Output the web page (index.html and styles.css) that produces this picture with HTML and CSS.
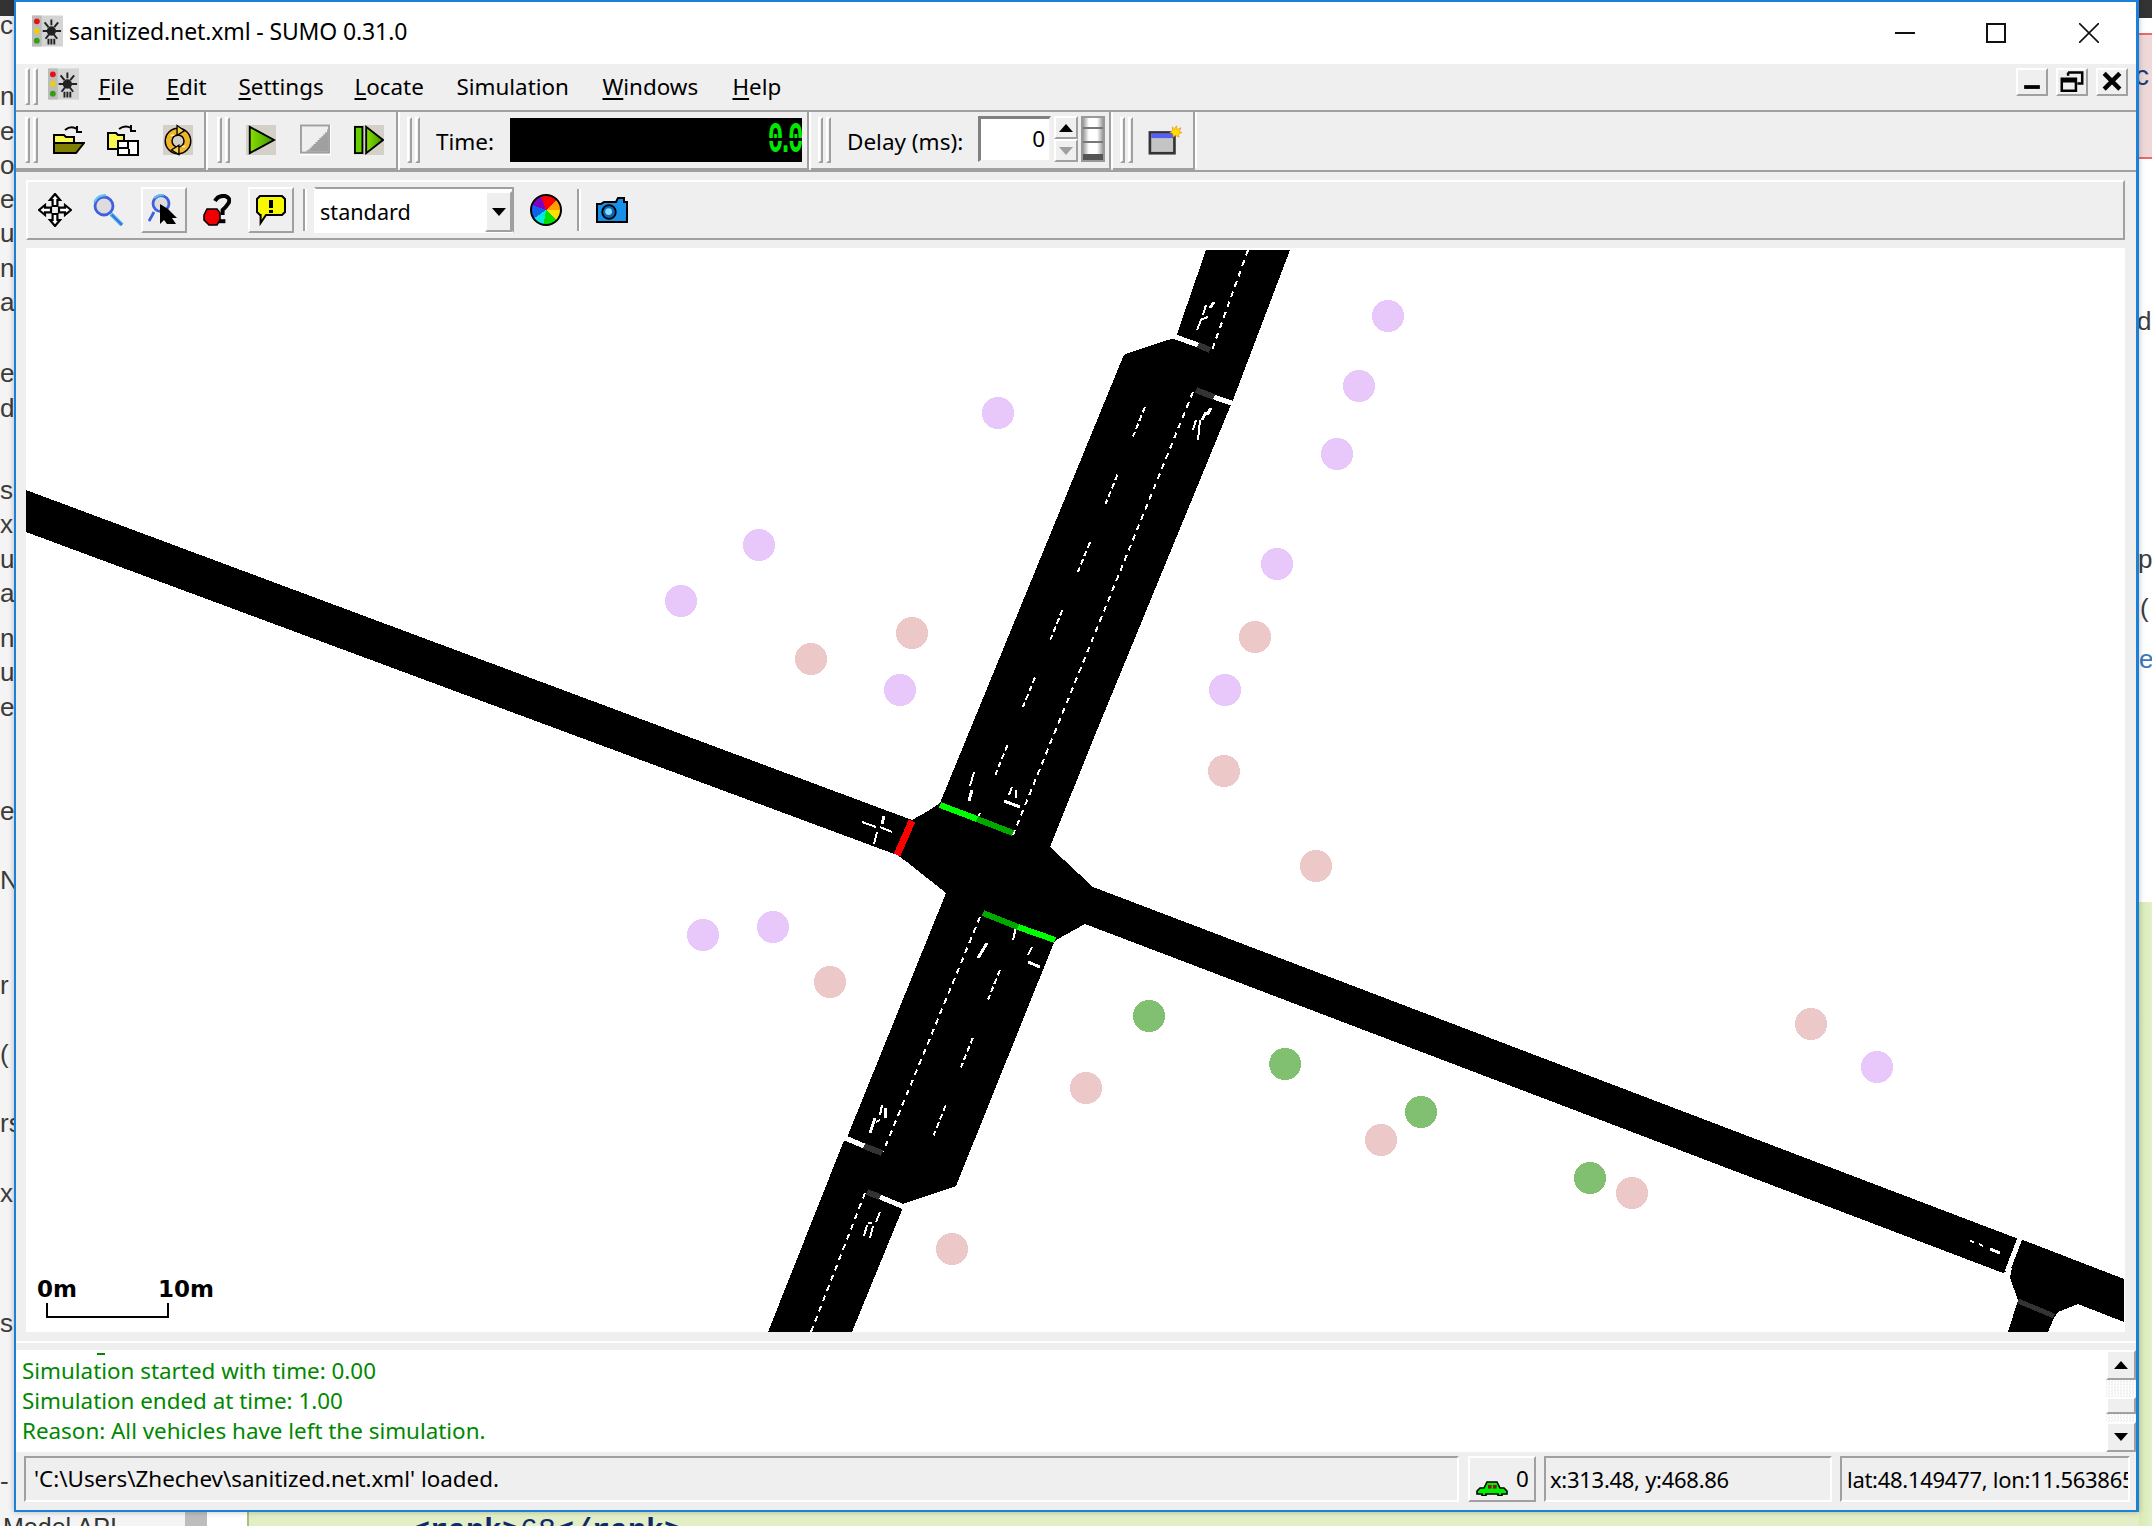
FILE: index.html
```html
<!DOCTYPE html>
<html lang="en">
<head>
<meta charset="utf-8">
<title>sanitized.net.xml - SUMO 0.31.0</title>
<link rel="stylesheet" href="styles.css">
</head>
<body>
<div class="desk">
  <div class="left-strip">
    <div class="dark-cap"></div>
    <p class="frag">c</p>
    <p class="frag m-a">n<br>e<br>o<br>e<br>u<br>n<br>a</p>
    <p class="frag m-b">e<br>d</p>
    <p class="frag m-c">s<br>x<br>u<br>a</p>
    <p class="frag m-d">n<br>u<br>e</p>
    <p class="frag m-e">e</p>
    <p class="frag m-f">N</p>
    <p class="frag m-e">r</p>
    <p class="frag m-f">(</p>
    <p class="frag m-f">rs</p>
    <p class="frag m-f">x</p>
    <p class="frag m-g">s</p>
    <p class="frag m-h">-</p>
  </div>
  <div class="right-strip">
    <div class="dark-cap"></div>
    <div class="pink-box"><span class="frag-r">c</span></div>
    <p class="frag frag-d">d</p>
    <p class="frag frag-p">p</p>
    <p class="frag frag-b">(</p>
    <p class="frag frag-e">e</p>
    <div class="green-fill"></div>
  </div>
  <div class="bottom-strip">
    <div class="api">Model API</div>
    <div class="api-scroll"></div>
    <div class="api-white"></div>
    <div class="code"><b>&lt;rank&gt;</b>68<b>&lt;/rank&gt;</b></div>
  </div>

  <div class="window">
    <header class="titlebar">
      <svg class="app-icon" viewBox="0 0 16 16"><use href="#logo"/></svg>
      <span class="title-text">sanitized.net.xml - SUMO 0.31.0</span>
      <div class="sys-buttons">
        <svg class="sys" viewBox="0 0 20 20"><path d="M0 10h20" stroke="#111" stroke-width="2"/></svg>
        <svg class="sys" viewBox="0 0 20 20"><rect x="1" y="1" width="18" height="18" fill="none" stroke="#111" stroke-width="2"/></svg>
        <svg class="sys sys-close" viewBox="0 0 20 20"><path d="M0 0l20 20M20 0L0 20" stroke="#111" stroke-width="1.6"/></svg>
      </div>
    </header>

    <nav class="menubar">
      <div class="grip"><i></i><i></i></div>
      <svg class="menu-icon" viewBox="0 0 16 16"><use href="#logo"/></svg>
      <ul class="menu">
        <li class="mi-file"><u>F</u>ile</li>
        <li class="mi-edit"><u>E</u>dit</li>
        <li class="mi-settings"><u>S</u>ettings</li>
        <li class="mi-locate"><u>L</u>ocate</li>
        <li class="mi-sim">Simulation</li>
        <li class="mi-win"><u>W</u>indows</li>
        <li class="mi-help"><u>H</u>elp</li>
      </ul>
      <div class="mdi-buttons">
        <button class="raised mdi"><svg viewBox="0 0 16 14"><rect x="3" y="9" width="10" height="2.4"/></svg></button>
        <button class="raised mdi"><svg viewBox="0 0 16 14"><path d="M5.5 1h9v7h-3M5.5 3V1M1.5 5h9v7.5h-9zM1.5 6.5h9" fill="none" stroke="#000" stroke-width="1.6"/></svg></button>
        <button class="raised mdi"><svg viewBox="0 0 16 14"><path d="M3 1.500l10 10M13 1.500l-10 10" stroke="#000" stroke-width="2.800"/></svg></button>
      </div>
    </nav>

    <div class="toolbar">
      <section class="tb sec1">
        <div class="grip"><i></i><i></i></div>
        <svg class="ic ic-open" viewBox="0 0 16 16">
          <path d="M6 3Q9 .6 12 2.500M12 1v3h2.500" fill="none" stroke="#000" stroke-width="1"/>
          <path d="M.5 5.500h5l1 1h4v3H.5z" fill="#f8f850" stroke="#000" stroke-width="1"/>
          <path d="M.5 14.500V9.500h15l-4 5z" fill="#808000" stroke="#000" stroke-width="1"/>
        </svg>
        <svg class="ic ic-open2" viewBox="0 0 16 16">
          <path d="M6 2.500Q9 .3 12 2M12 .5v3h2.500" fill="none" stroke="#000" stroke-width="1"/>
          <path d="M.5 4.500h4l1 1h3v7H.5z" fill="#f8f850" stroke="#000" stroke-width="1"/>
          <rect x="5.500" y="8.500" width="10" height="7" fill="#fff" stroke="#000"/>
          <path d="M10.500 9v3M6 12h5M11 12.500v3" stroke="#000"/>
        </svg>
        <svg class="ic ic-reload" viewBox="0 0 16 16">
          <rect width="16" height="16" fill="#d4d0c8"/>
          <circle cx="8" cy="8.500" r="5" fill="none" stroke="#000" stroke-width="4.400"/>
          <circle cx="8" cy="8.500" r="5" fill="none" stroke="#f0b428" stroke-width="2.800"/>
          <path d="M7.500 .3l4 2.700-4 2.500zM8.500 15.800l-4-2.500 4-2.500z" fill="#f8d048" stroke="#000" stroke-width=".7"/>
          <path d="M4 5.500h2M10 11.500h2" stroke="#fff3a0" stroke-width=".8"/>
        </svg>
      </section>
      <section class="tb sec2">
        <div class="grip"><i></i><i></i></div>
        <svg class="ic ic-play" viewBox="0 0 16 16">
          <defs><linearGradient id="gr" x1="0" x2="1" y1="0" y2="0"><stop offset="0" stop-color="#88e000"/><stop offset="1" stop-color="#409800"/></linearGradient></defs>
          <rect width="16" height="16" fill="#d4d0c8"/>
          <path d="M2 1v14l13-7z" fill="url(#gr)" stroke="#000" stroke-width="1"/>
        </svg>
        <svg class="ic ic-stop" viewBox="0 0 16 16">
          <rect x="0" y="0" width="16" height="16" fill="#fff"/>
          <path d="M0 0h15.500v15H0z" fill="#efefef"/>
          <path d="M14.500 2v12H3l1-1h1v-1h1v-1h1v-1h1V9h1V8h1V7h1V6h1V5h1V4h1V3z" fill="#a0a0a0"/>
          <rect x=".5" y=".5" width="14.500" height="14" fill="none" stroke="#a0a0a0"/>
        </svg>
        <svg class="ic ic-step" viewBox="0 0 16 16">
          <rect x="5" width="11" height="16" fill="#d4d0c8"/>
          <rect x=".5" y="1" width="4" height="14" fill="#66d000" stroke="#000"/>
          <path d="M6.500 1v14L15.500 8z" fill="url(#gr)" stroke="#000"/>
        </svg>
      </section>
      <section class="tb sec3">
        <div class="grip"><i></i><i></i></div>
        <label class="time-label">Time:</label>
        <div class="lcd"><span class="lcd-digits">0.0</span></div>
      </section>
      <section class="tb sec4">
        <div class="grip"><i></i><i></i></div>
        <label class="delay-label">Delay (ms):</label>
        <div class="spin-input">0</div>
        <div class="spin-arrows">
          <button class="raised spin-btn"><span class="tri-up"></span></button>
          <button class="raised spin-btn"><span class="tri-down tri-grey"></span></button>
        </div>
        <div class="dial"><i></i><i></i><i></i></div>
      </section>
      <section class="tb sec5">
        <div class="grip"><i></i><i></i></div>
        <svg class="ic-new" viewBox="0 0 18 16">
          <rect x="1" y="4" width="13" height="11" fill="#c4c4c4" stroke="#333" stroke-width="1.400"/>
          <rect x="1.700" y="4.500" width="11.600" height="2.500" fill="#5860f0"/>
          <path d="M13 1l1 1.500 1-2 .5 2 2-1-1 2 1.500.5-2 1 .5 1.500-2-1-1 1-.5-2-1.500-.5 1.500-1z" fill="#ffe000" stroke="#f08000" stroke-width=".3"/>
        </svg>
      </section>
    </div>

    <div class="viewbar">
      <svg class="ic ic-move" viewBox="0 0 17 17">
        <path d="M8.500 .5l2.500 3h-1.300v3h-2.400v-3H6zM8.500 16.500l2.500-3h-1.300v-3h-2.400v3H6zM.5 8.500l3-2.500v1.300h3v2.400h-3V11zM16.500 8.500l-3-2.500v1.300h-3v2.400h3V11z" fill="#fff" stroke="#000" stroke-width="1.100"/>
      </svg>
      <svg class="ic ic-zoom" viewBox="0 0 16 16"><use href="#glass"/></svg>
      <button class="raised vb-btn vb-locate">
        <svg class="ic-small" viewBox="0 0 16 16">
          <use href="#glass-short"/>
          <path d="M6 5v10l2-2 1.500 2H14l-2-3h2.500L10 7.500z" fill="#000"/>
        </svg>
      </button>
      <svg class="ic ic-help" viewBox="0 0 14 16">
        <path d="M.5 10.500l1.500-3h5l1.500 2V13l-1.500 2.500H3L.5 13z" fill="#f00000" stroke="#000" stroke-width=".8"/>
        <path d="M6 3.500Q7.500.6 11 1q3 .8 1.800 3.500Q11.500 6.500 9.800 8v2.500" fill="none" stroke="#000" stroke-width="2"/>
        <rect x="8" y="12.600" width="3.200" height="2" fill="#000"/>
      </svg>
      <button class="raised vb-btn vb-note">
        <svg class="ic-small" viewBox="0 0 16 16">
          <path d="M2.500 1h11l1.500 1.500v6.500l-1.500 1.500H5.500L2.800 14.500V10.500H2.500L1 9V2.500z" fill="#f8f800" stroke="#000" stroke-width="1"/>
          <rect x="7" y="3" width="2" height="4" fill="#000"/><rect x="7" y="8" width="2" height="1.500" fill="#000"/>
        </svg>
      </button>
      <span class="vsep"></span>
      <div class="combo">
        <span class="combo-text">standard</span>
        <span class="raised combo-arrow"><span class="tri-down"></span></span>
      </div>
      <span class="wheel"></span>
      <span class="vsep sep2"></span>
      <svg class="ic ic-camera" viewBox="0 0 16 13">
        <path d="M.5 3.500h2l1.500-1h6l1-2h3v2h1.500v10H.5z" fill="#1890e8" stroke="#000" stroke-width="1"/>
        <circle cx="6.500" cy="7.500" r="3.400" fill="#0a68b8" stroke="#000" stroke-width=".9"/>
        <circle cx="6.300" cy="7.300" r="1.700" fill="#88d8ff"/>
      </svg>
    </div>

    <div class="canvas">
      <svg class="map" viewBox="26 250 2098 1082" width="2098" height="1082">
        <g shape-rendering="crispEdges">
          <path d="M26 490L912 820 928 811 940 803 1123 357 1125 354 1168 340 1177 338 1177 334 1206 250H1290L1233 400 1230 407 1093 740 1050 847 1093 887 2016 1238 2023 1240 2124 1279V1322L2078 1304 2058 1312 2054 1318 2048 1332H2008L2018 1300 2010 1278 2012 1268 2003 1273 1085 924 1056 940 1053 945 956 1186 902 1204 902 1210 852 1332H768L843 1143 848 1135 946 893 907 862 897 855 26 532Z" fill="#000"/>
          <g fill="none" stroke="#fff">
            <path d="M2020 1238L2007 1272M1170 335L1198 345M1214 397L1237 405M843 1137L864 1146M880 1197L904 1207" stroke-width="5"/>
            <g stroke-width="2">
              <path d="M1248 250L1212 350M1193 392L1013 835M980 917L883 1152M865 1193L811 1332" stroke-dasharray="6 5"/>
              <path d="M1145 407L977 820" stroke-dasharray="6 3 6 3 6 3 5 41"/>
              <path d="M1000 970L933 1137" stroke-dasharray="6 3 6 3 6 3 5 41"/>
              <path d="M1016 927L1013 940M862 822l14 5M880 827l12 5M877 832l-3 12M974 772l-4 14M1012 787l-3 8M1016 790v8M1032 947l-4 8M1197 330l4-10M1200 320l8-3M1206 305l-3 10M1193 430l3-10M1200 420l-2 20M882 1105l-2 10M876 1122l4-2M880 1212l-4 10M868 1223h4M864 1236l3-11M870 1238l3-12M1970 1241l4 1M1979 1244l4 2"/>
            </g>
            <g stroke-width="3">
              <path d="M882 824l2-8M969 801l3-11M978 958l9-15M1004 801l16 6M1028 962l12 5M1210 308l4-6M1207 415l4-7M1202 420l4-8M870 1133l5-15M885 1108v10M1990 1249l10 4"/>
            </g>
          </g>
          <g fill="none" stroke="#333" stroke-width="6">
            <path d="M1198 345L1210 350M1196 390L1214 397M864 1146L882 1153M867 1192L880 1197"/>
            <path d="M2018 1301L2054 1316" stroke-width="5"/>
          </g>
          <g fill="none" stroke-width="6">
            <path d="M912 821L897 855" stroke="#f00" stroke-width="7"/>
            <path d="M940 805L977 819M1018 927L1055 940" stroke="#0f0"/>
            <path d="M977 819L1013 833M983 913L1018 927" stroke="#00a800"/>
          </g>
          <g class="dots-purple">
            <circle cx="1388" cy="316" r="16"/><circle cx="1359" cy="386" r="16"/><circle cx="1337" cy="454" r="16"/>
            <circle cx="1277" cy="564" r="16"/><circle cx="1225" cy="690" r="16"/><circle cx="998" cy="413" r="16"/>
            <circle cx="759" cy="545" r="16"/><circle cx="681" cy="601" r="16"/><circle cx="900" cy="690" r="16"/>
            <circle cx="703" cy="935" r="16"/><circle cx="773" cy="927" r="16"/><circle cx="1877" cy="1067" r="16"/>
          </g>
          <g class="dots-pink">
            <circle cx="1255" cy="637" r="16"/><circle cx="1224" cy="771" r="16"/><circle cx="1316" cy="866" r="16"/>
            <circle cx="912" cy="633" r="16"/><circle cx="811" cy="659" r="16"/><circle cx="830" cy="982" r="16"/>
            <circle cx="1086" cy="1088" r="16"/><circle cx="1381" cy="1140" r="16"/><circle cx="1632" cy="1193" r="16"/>
            <circle cx="952" cy="1249" r="16"/><circle cx="1811" cy="1024" r="16"/>
          </g>
          <g class="dots-green">
            <circle cx="1149" cy="1016" r="16"/><circle cx="1285" cy="1064" r="16"/><circle cx="1421" cy="1112" r="16"/><circle cx="1590" cy="1178" r="16"/>
          </g>
          <path d="M47 1303V1317H168V1303" fill="none" stroke="#000" stroke-width="2"/>
        </g>
        <text class="scale-text" x="37" y="1297">0m</text>
        <text class="scale-text" x="158" y="1297">10m</text>
      </svg>
    </div>

    <div class="splitter"></div>

    <div class="messages">
      <div class="msg-text">
        <span class="tick"></span>
        <p>Simulation started with time: 0.00</p>
        <p>Simulation ended at time: 1.00</p>
        <p>Reason: All vehicles have left the simulation.</p>
      </div>
      <div class="scrollbar">
        <button class="raised sb-btn"><span class="tri-up"></span></button>
        <div class="sb-track"><span class="raised sb-thumb"></span></div>
        <button class="raised sb-btn"><span class="tri-down"></span></button>
      </div>
    </div>

    <footer class="statusbar">
      <div class="sunken st-main">'C:\Users\Zhechev\sanitized.net.xml' loaded.</div>
      <div class="raised st-car">
        <svg class="car" viewBox="0 0 16 8">
          <path d="M.5 5.500L2 4h2l1.500-3h5L12 4h2l1.500 1.500v1.500H13v.8h-2V7H5v.8H3V7H.5z" fill="#00f000" stroke="#000" stroke-width=".8"/>
          <rect x="6" y="2.500" width="1.800" height="1.800" fill="#901010"/><rect x="8.500" y="2.500" width="1.800" height="1.800" fill="#901010"/>
        </svg>
        <span>0</span>
      </div>
      <div class="sunken st-xy">x:313.48, y:468.86</div>
      <div class="sunken st-geo">lat:48.149477, lon:11.563865</div>
    </footer>
  </div>
</div>

<svg class="defs" width="0" height="0">
  <defs>
    <g id="logo">
      <rect width="16" height="16" fill="#d4d4d4"/>
      <rect x="0" y="0" width="5" height="16" fill="#bcbcbc"/>
      <circle cx="2.500" cy="3" r="1.500" fill="#e81010"/>
      <circle cx="2.500" cy="8" r="1.500" fill="#e8d010"/>
      <circle cx="2.500" cy="13" r="1.500" fill="#30a010"/>
      <path d="M10 2v3M6.500 3.500l2 2.500M13.500 3.500l-2 2.500M5.500 8h2.500M12 8h3M7 12l2-2.500M13 12l-2-2.500M8.500 15v-3M11.500 15v-3M10 15v-3" stroke="#222" stroke-width="1"/>
      <circle cx="10" cy="8" r="2.400" fill="#222"/>
    </g>
    <g id="glass">
      <path d="M9.500 10l5.500 5.500" stroke="#40b0e8" stroke-width="2"/>
      <path d="M10 10.500l5 5" stroke="#4060e0" stroke-width=".7"/>
      <circle cx="6" cy="6" r="4.500" fill="#dcdcdc" stroke="#4060e0" stroke-width="1.400"/>
      <path d="M1.200 4Q2.800 .6 7 .6" fill="none" stroke="#60c0f0" stroke-width="1.100"/>
    </g>
    <g id="glass-short">
      <path d="M3 9l-2.500 4.500" stroke="#4060e0" stroke-width="1.400"/>
      <circle cx="6.500" cy="4.800" r="4" fill="#dcdcdc" stroke="#4060e0" stroke-width="1.400"/>
      <path d="M3 2Q5 .2 8 .4" fill="none" stroke="#60c0f0" stroke-width="1.100"/>
    </g>
  </defs>
</svg>
</body>
</html>
```
FILE: styles.css
```css
* { box-sizing: border-box; }
html, body { margin: 0; padding: 0; }
body { width: 2152px; height: 1526px; overflow: hidden; background: #fff; }
p { margin: 0; }
button { padding: 0; margin: 0; font: inherit; background: #efefef; }

.desk { position: relative; width: 2152px; height: 1526px; overflow: hidden; font-family: "Noto Sans", sans-serif; color: #000; }

/* Things visible behind the SUMO window */
.left-strip { position: absolute; left: 0; top: 0; width: 16px; height: 1512px; background: #f4f4f4; overflow: hidden; }
.right-strip { position: absolute; left: 2139px; top: 0; width: 13px; height: 1526px; background: #fff; overflow: hidden; display: flex; flex-direction: column; }
.dark-cap { height: 18px; background: #333; }
.left-strip .dark-cap { height: 16px; margin-bottom: -8px; }
.frag { font: 26px/34.3px "Liberation Sans", sans-serif; color: #3c3c3c; }
.m-a { margin-top: 37px; }
.m-b { margin-top: 37px; }
.m-c { margin-top: 48px; }
.m-d { margin-top: 11px; }
.m-e { margin-top: 70px; }
.m-f { margin-top: 35px; }
.m-g { margin-top: 96px; }
.m-h { margin-top: 124px; }
.pink-box { margin-top: 15px; height: 126px; background: #efd8d8; border-top: 2px solid #f06868; border-bottom: 2px solid #f06868; padding-top: 24px; }
.frag-r { display: block; margin-left: -4px; font: 28px/34px "Liberation Sans", sans-serif; color: #1c3c70; }
.frag-d { margin-top: 145px; margin-left: -2px; }
.frag-p { margin-top: 204px; margin-left: -1px; }
.frag-b { margin-top: 14px; margin-left: 1px; }
.frag-e { margin-top: 17px; color: #3c78b8; }
.green-fill { flex: 1; margin-top: 226px; background: linear-gradient(90deg, #d8ebb4, #e4f0ca); }
.bottom-strip { position: absolute; left: 0; top: 1512px; width: 2139px; height: 14px; display: flex; overflow: hidden; }
.api { width: 185px; background: #f4f4f4; font: 25px/30px "Liberation Sans", sans-serif; color: #333; padding-left: 3px; white-space: nowrap; }
.api-scroll { width: 22px; background: #bdbdbd; }
.api-white { width: 40px; background: #fff; }
.code { flex: 1; background: #e2efc6; border-left: 2px solid #a8c080; padding: 3px 0 0 163px; font: 30px/32px "Liberation Mono", monospace; color: #10286c; white-space: nowrap; }
.code b { font-weight: 700; }

/* Window */
.window { position: absolute; left: 14px; top: 0; width: 2125px; height: 1512px; border: 2px solid #1c80d8; border-right-width: 3px; background: #efefef; display: flex; flex-direction: column; box-shadow: 0 0 6px rgba(0,0,0,.25); }

.titlebar { height: 62px; background: #fff; display: flex; align-items: center; padding: 0 0 4px 16px; flex: none; }
.app-icon { width: 31px; height: 32px; margin-right: 6px; }
.title-text { font-size: 23px; line-height: 30px; letter-spacing: -.13px; }
.sys-buttons { margin-left: auto; display: flex; gap: 71px; padding-right: 37px; padding-top: 4px; }
.sys { width: 20px; height: 20px; display: block; }
.sys-close { margin-left: 2px; }

.grip { display: flex; gap: 3px; width: 13px; height: 46px; flex: none; }
.grip i { display: block; width: 5px; background: #efefef; border: 2px solid; border-color: #fff #a0a0a0 #a0a0a0 #fff; }

.menubar { height: 48px; display: flex; align-items: flex-start; border-bottom: 2px solid #a0a0a0; padding: 4px 8px 0 8.500px; flex: none; }
.menubar .grip { height: 37px; }
.menu-icon { width: 31px; height: 32px; margin-left: 10px; flex: none; }
.menu { list-style: none; margin: 0; padding: 0; display: flex; font-size: 22.4px; line-height: 30px; height: 38px; align-items: center; position: relative; }
.menu li { flex: none; }
.menu u { text-underline-offset: 3px; }
.mi-file { margin-left: 20px; width: 68px; }
.mi-edit { width: 72px; }
.mi-settings { width: 116px; }
.mi-locate { width: 102px; }
.mi-sim { width: 146px; }
.mi-win { width: 130px; }
.mi-help { width: 60px; }
.mdi-buttons { margin-left: auto; display: flex; gap: 8px; }

.raised { border: 2px solid; border-color: #fff #a0a0a0 #a0a0a0 #fff; background: #efefef; }
.sunken { border: 2px solid; border-color: #a0a0a0 #fff #fff #a0a0a0; background: #efefef; }
.mdi { width: 32px; height: 28px; display: flex; align-items: center; justify-content: center; }
.mdi svg { width: 26px; height: 22px; display: block; }
.mdi rect { fill: #000; }

.toolbar { height: 60px; display: flex; border-bottom: 2px solid #a0a0a0; flex: none; }
.tb { height: 58px; display: flex; align-items: center; border-bottom: 2px solid #a0a0a0; border-right: 2px solid #a0a0a0; position: relative; flex: none; margin-right: 2px; }
.tb::after { content: ""; position: absolute; right: -4px; top: 0; bottom: 0; width: 2px; background: #fff; }
.sec1 { width: 190px; padding-left: 8.500px; }
.sec2 { width: 190px; padding-left: 9px; }
.sec3 { width: 409px; padding-left: 7px; }
.sec4 { width: 300px; padding-left: 7px; }
.sec5 { width: 82px; padding-left: 7px; }
.ic { display: block; flex: none; }
.ic-open { width: 32px; height: 32px; margin-left: 15px; }
.ic-open2 { width: 32px; height: 32px; margin-left: 22px; }
.ic-reload { width: 30px; height: 32px; margin-left: 24px; }
.ic-play { width: 30px; height: 32px; margin-left: 16px; }
.ic-stop { width: 31px; height: 32px; margin-left: 24px; }
.ic-step { width: 30px; height: 32px; margin-left: 23px; }
.time-label { margin-left: 16px; font-size: 22.5px; width: 74px; padding-top: 2px; }
.lcd { width: 292px; height: 44px; background: #000; position: relative; overflow: hidden; }
.lcd-digits { position: absolute; right: 4px; top: 4px; font: 700 26px/36px "Liberation Mono", monospace; color: #00ea00; letter-spacing: -5.500px; transform: scaleY(1.7); }
.lcd::after { content: ""; position: absolute; left: 0; right: 0; top: 20px; height: 3px; background: #000; }
.delay-label { margin-left: 16px; font-size: 22.5px; width: 131px; white-space: nowrap; padding-top: 2px; }
.spin-input { width: 73px; height: 46px; margin-top: -2px; background: #fff; border: 2px solid; border-color: #808080 #f0f0f0 #f0f0f0 #808080; border-top-width: 3px; border-left-width: 3px; text-align: right; padding-right: 4px; font-size: 22.5px; line-height: 40px; }
.spin-arrows { display: flex; flex-direction: column; margin-left: 3px; width: 24px; margin-top: -2px; }
.spin-btn { width: 24px; height: 23px; display: flex; align-items: center; justify-content: center; }
.tri-up, .tri-down { display: block; width: 0; height: 0; border-left: 7px solid transparent; border-right: 7px solid transparent; }
.tri-up { border-bottom: 8px solid #000; }
.tri-down { border-top: 8px solid #000; }
.tri-grey { border-top-color: #a0a0a0; }
.dial { width: 24px; height: 46px; margin-left: 3px; margin-top: -2px; border: 2px solid #999; background: linear-gradient(90deg, #999, #fff 30%, #fff 70%, #999); display: flex; flex-direction: column; justify-content: space-between; padding: 9px 0 0; }
.dial i { display: block; height: 2px; background: #777; }
.dial i:last-child { height: 6px; background: #555; }
.ic-new { width: 34px; height: 32px; margin-left: 15px; display: block; flex: none; }

.viewbar { height: 60px; margin: 8px 11px 0 10px; border: 2px solid; border-color: #fff #a0a0a0 #a0a0a0 #fff; display: flex; align-items: center; flex: none; }
.ic-move { width: 34px; height: 34px; margin-left: 10px; }
.ic-zoom { width: 32px; height: 32px; margin-left: 20px; }
.vb-btn { width: 46px; height: 46px; display: flex; align-items: center; justify-content: center; flex: none; }
.vb-locate { margin-left: 17px; }
.ic-small { width: 32px; height: 32px; display: block; }
.ic-help { width: 28px; height: 32px; margin-left: 16px; }
.vb-note { margin-left: 17px; }
.vsep { display: block; flex: none; width: 4px; height: 42px; margin-left: 9px; border-left: 2px solid #a0a0a0; border-right: 2px solid #fff; }
.combo { width: 200px; height: 46px; margin-left: 7px; background: #fff; border: 2px solid; border-color: #a0a0a0 #a0a0a0 #fff #fff; display: flex; flex: none; align-items: center; position: relative; }
.combo-text { font-size: 21.6px; padding: 2px 0 0 4px; }
.combo-arrow { position: absolute; right: 0; top: 2px; width: 27px; height: 41px; display: flex; align-items: center; justify-content: center; }
.wheel { display: block; width: 32px; height: 32px; border-radius: 50%; margin-left: 16px; border: 2px solid #000; flex: none; background: conic-gradient(#f00 0 45deg, #ffa000 45deg 90deg, #ffe000 90deg 135deg, #00e000 135deg 190deg, #00e8e0 190deg 235deg, #1060f0 235deg 290deg, #8000c0 290deg 340deg, #f00 340deg); }
.sep2 { margin-left: 15px; }
.ic-camera { width: 32px; height: 26px; margin-left: 15px; }

.canvas { height: 1084px; margin: 8px 11px 0 10px; background: #fff; padding-top: 2px; flex: none; }
.map { display: block; }
.dots-purple { fill: #e8c8fb; }
.dots-pink { fill: #edc8c8; }
.dots-green { fill: #80c070; }
.scale-text { font: 700 23px "DejaVu Sans", sans-serif; fill: #000; }

.splitter { height: 18px; flex: none; position: relative; }
.splitter::after { content: ""; position: absolute; left: 0; right: 0; top: 9px; height: 2px; background: #fff; }

.messages { height: 102px; background: #fff; display: flex; flex: none; }
.msg-text { flex: 1; padding: 6px 0 0 6px; font-size: 22.4px; line-height: 30px; color: #008800; position: relative; }
.tick { position: absolute; left: 81px; top: 3px; width: 8px; height: 2px; background: #008800; }
.scrollbar { width: 30px; display: flex; flex-direction: column; flex: none; }
.sb-btn { height: 30px; width: 30px; display: flex; align-items: center; justify-content: center; flex: none; }
.sb-track { height: 42px; background: repeating-conic-gradient(#fff 0 25%, #efefef 0 50%) 0 0 / 3px 3px; padding-top: 17px; }
.sb-thumb { display: block; height: 17px; width: 30px; }

.statusbar { height: 58px; display: flex; padding: 4px 0 0 8px; flex: none; font-size: 22.4px; line-height: 42px; white-space: nowrap; }
.statusbar > div { height: 46px; flex: none; overflow: hidden; }
.st-main { width: 1435px; padding-left: 8px; }
.st-car { width: 68px; margin-left: 9px; display: flex; padding-left: 6px; }
.car { width: 32px; height: 16px; display: block; margin-top: 22px; flex: none; }
.st-car span { margin-left: 8px; }
.st-xy { width: 288px; margin-left: 8px; padding-left: 4px; font-size: 22px; letter-spacing: -.28px; }
.st-geo { width: 290px; margin-left: 8px; padding-left: 5px; font-size: 22px; letter-spacing: -.28px; }
.defs { position: absolute; }
```
